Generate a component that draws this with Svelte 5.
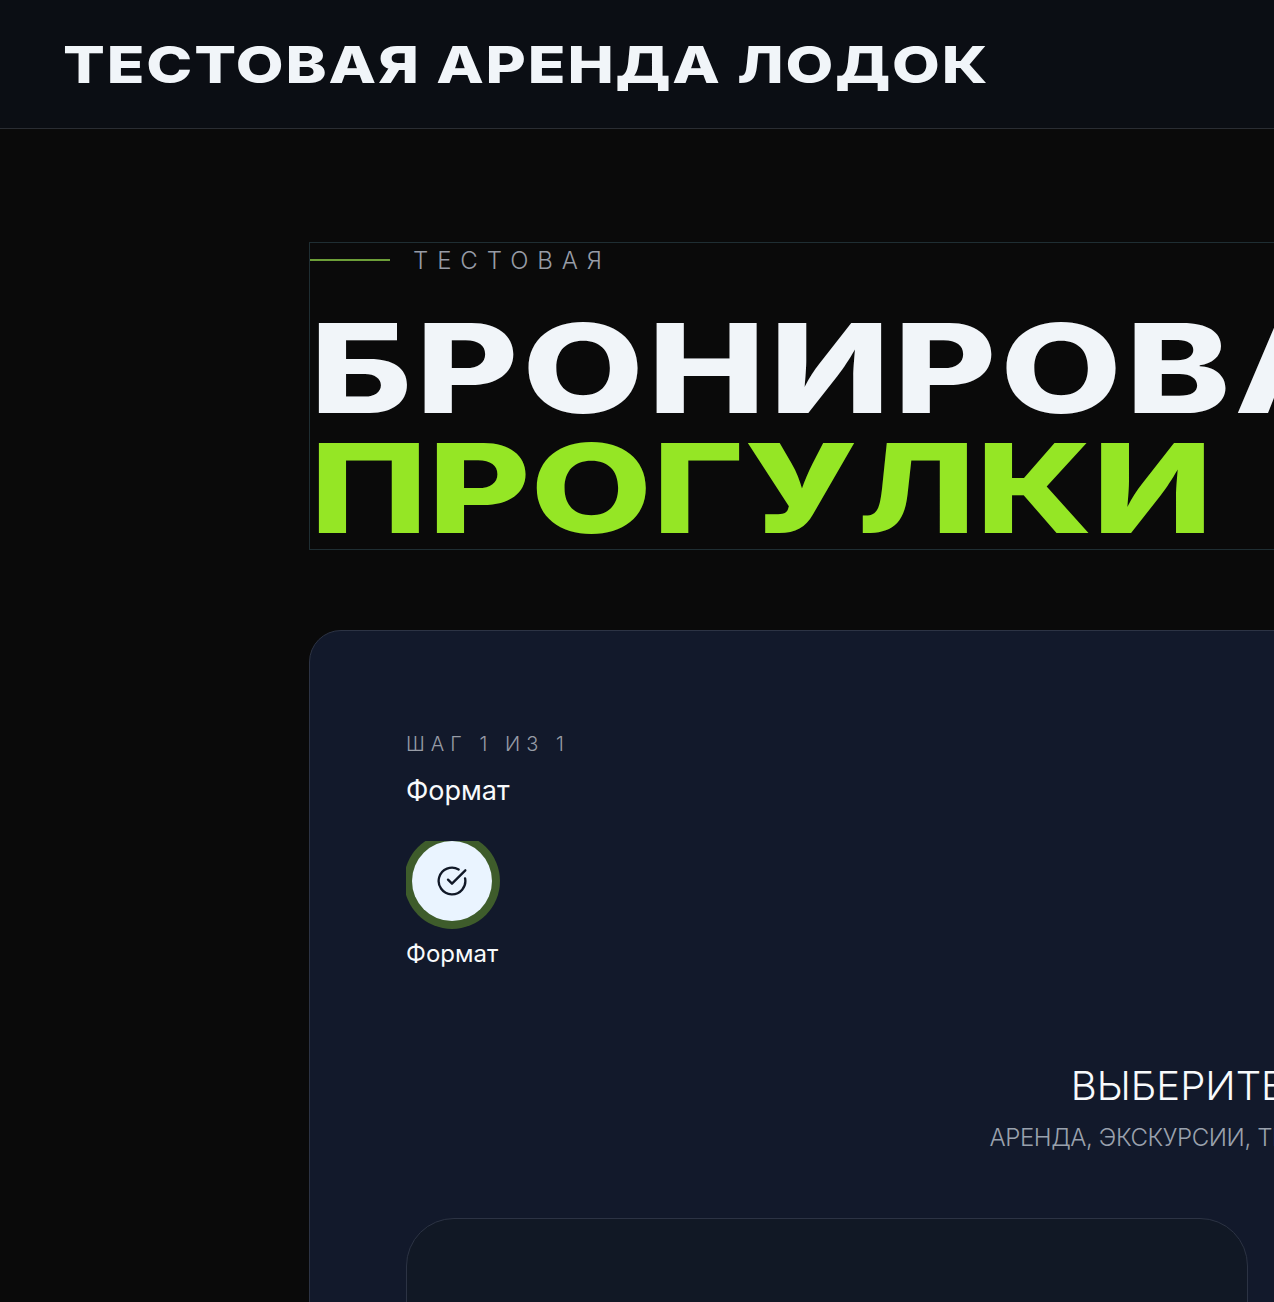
<script lang="ts">
    const eyebrow = 'ТЕСТОВАЯ';
    const steps = [{ label: 'Формат' }];
</script>

<div class="page">
    <header class="topbar">
        <span class="brand">ТЕСТОВАЯ АРЕНДА ЛОДОК</span>
    </header>

    <main class="content">
        <section class="hero">
            <div class="eyebrow">
                <span class="eyebrow-line"></span>
                <span>{eyebrow}</span>
            </div>
            <h1>
                <span class="line">БРОНИРОВАНИЕ</span>
                <span class="line accent">ПРОГУЛКИ</span>
            </h1>
        </section>

        <section class="card">
            <div class="step-count">ШАГ 1 ИЗ 1</div>
            <div class="step-title">Формат</div>
            <div class="steps">
                {#each steps as step}
                    <div class="step">
                        <div class="bubble">
                            <svg viewBox="0 0 24 24" width="32" height="32" fill="none" stroke="currentColor" stroke-width="1.75" stroke-linecap="round" stroke-linejoin="round">
                                <path d="M21.8 10A10 10 0 1 1 17 3.34" />
                                <path d="m9 11 3 3L22 4" />
                            </svg>
                        </div>
                        <div class="step-label">{step.label}</div>
                    </div>
                {/each}
            </div>

            <div class="choose">
                <h2>ВЫБЕРИТЕ ФОРМАТ</h2>
                <p>АРЕНДА, ЭКСКУРСИИ, ТЕСТОВЫЕ МАРШРУТЫ</p>
            </div>

            <div class="options">
                <div class="option"></div>
                <div class="option"></div>
            </div>
        </section>
    </main>
</div>

<style>
    :global(html), :global(body) {
        margin: 0;
        background: #0a0a0a;
        overflow: hidden;
    }

    .page {
        width: 2544px;
        height: 1302px;
        overflow: hidden;
        font-family: Inter, "Liberation Sans", sans-serif;
        background: #0a0a0a;
    }

    .topbar {
        height: 128px;
        border-bottom: 1px solid #2a2d33;
        background: #0b0e14;
        display: flex;
        align-items: center;
        padding-left: 63px;
    }

    .brand {
        display: block;
        font-size: 51px;
        font-weight: 800;
        line-height: 1;
        color: #f1f5f9;
        letter-spacing: 1.5px;
        white-space: nowrap;
        transform: scaleX(1.214);
        transform-origin: left center;
    }

    .content {
        padding: 113px 309px 0;
    }

    .hero {
        border: 1px solid #1f2e33;
        height: 306px;
    }

    .eyebrow {
        display: flex;
        align-items: center;
        gap: 23px;
        height: 34px;
        font-size: 24px;
        font-weight: 300;
        letter-spacing: 8.9px;
        color: #979ca6;
    }

    .eyebrow-line {
        width: 80px;
        height: 2px;
        background: #6c9e38;
    }

    h1 {
        margin: 31px 0 0;
        font-size: 124px;
        font-weight: 800;
        line-height: 120px;
        color: #f1f5f9;
    }

    .line {
        display: block;
        white-space: nowrap;
        letter-spacing: 3px;
        transform: scaleX(1.27);
        transform-origin: left center;
    }

    .line.accent {
        color: #95e625;
        letter-spacing: 0;
    }

    .card {
        margin-top: 80px;
        padding: 96px 96px 0;
        border: 1px solid #2c3344;
        border-radius: 32px;
        background: #12192b;
    }

    .step-count {
        font-size: 20px;
        font-weight: 300;
        line-height: 34px;
        letter-spacing: 0.3em;
        color: #979ca6;
    }

    .step-title {
        margin-top: 10px;
        font-size: 27px;
        line-height: 40px;
        color: #f8fafc;
    }

    .steps {
        display: flex;
        margin-top: 30px;
        overflow: hidden;
    }

    .step {
        display: flex;
        flex-direction: column;
        align-items: center;
    }

    .bubble {
        width: 80px;
        height: 80px;
        border-radius: 50%;
        background: #eaf4ff;
        color: #111827;
        box-shadow: 0 0 0 8px #3e5c2b;
        display: flex;
        align-items: center;
        justify-content: center;
    }

    .step-label {
        margin-top: 17px;
        font-size: 24px;
        line-height: 32px;
        color: #f8fafc;
    }

    .choose {
        margin-top: 88px;
        text-align: center;
    }

    h2 {
        margin: 0;
        padding-right: 4px;
        font-size: 40px;
        font-weight: 300;
        line-height: 56px;
        color: #f8fafc;
    }

    .choose p {
        margin: 6px 0 0;
        padding-right: 26px;
        font-size: 24px;
        font-weight: 300;
        line-height: 36px;
        letter-spacing: -0.4px;
        color: #9aa1ad;
    }

    .options {
        display: grid;
        grid-template-columns: 842px 842px;
        gap: 48px;
        margin-top: 62px;
    }

    .option {
        height: 400px;
        border: 1px solid #2c3344;
        border-radius: 48px;
        background: #111825;
    }
</style>
